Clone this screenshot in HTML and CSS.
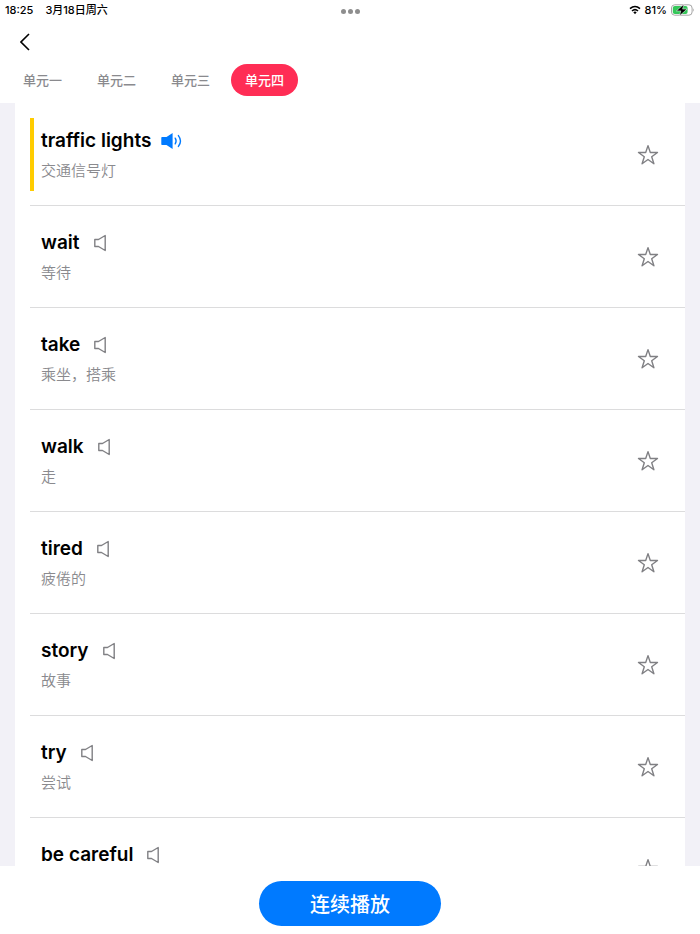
FILE: index.html
```html
<!DOCTYPE html>
<html lang="zh-CN">

<head>
    <meta charset="UTF-8">
    <meta name="viewport" content="width=device-width, initial-scale=1.0">
    <title>单元四</title>
    <link rel="stylesheet" href="styles.css">
</head>

<body>
    <!-- Shared icons -->
    <svg class="sprite" aria-hidden="true">
        <symbol id="speaker" viewBox="0 0 24 18">
            <path d="M0.8 5.5H4.5L11.2 1.5V16.5L4.5 12.5H0.8Z" fill="none" stroke="currentColor" stroke-width="1.4" stroke-linejoin="round" />
        </symbol>
        <symbol id="speaker-on" viewBox="0 0 24 18">
            <path d="M1 5H5.5L11.6 1V17L5.5 13H1Q0.3 13 0.3 12.3V5.7Q0.3 5 1 5Z" fill="currentColor" />
            <path d="M14.2 6.2Q16 9 14.2 11.8M17.4 3.6Q21.6 9 17.4 14.4" fill="none" stroke="currentColor" stroke-width="1.4" stroke-linecap="round" />
        </symbol>
        <symbol id="star" viewBox="0 0 22 22">
            <path d="M11 1.6L13.3 8.5H20.5L14.7 12.8L16.9 19.8L11 15.5L5.1 19.8L7.3 12.8L1.5 8.5H8.7Z" fill="none" stroke="currentColor" stroke-width="1.4" stroke-linejoin="round" />
        </symbol>
    </svg>

    <!-- Status bar -->
    <div class="status">
        <div class="status-left"><span>18:25</span><span>3月18日周六</span></div>
        <div class="dots"><i></i><i></i><i></i></div>
        <div class="status-right">
            <svg width="12" height="10" viewBox="0 0 12 10">
                <path d="M1 3.7Q6 -0.7 11 3.7M3 6Q6 3.4 9 6" fill="none" stroke="#000" stroke-width="1.6" />
                <path d="M4.3 7.3Q6 5.9 7.7 7.3L6 9.2Z" />
            </svg>
            <span>81%</span>
            <svg width="24" height="12" viewBox="0 0 24 12">
                <rect x="0.5" y="0.8" width="20.6" height="10.4" rx="3.2" fill="#fff" stroke="#a5a5a5" />
                <rect x="1.8" y="2.1" width="14.8" height="7.8" rx="2" fill="#34c759" />
                <path d="M22.2 4.2Q23.8 6 22.2 7.8Z" fill="#a5a5a5" />
                <path d="M12.9 0.2L5.4 6.9H9.8L8.5 11.8L16 5.1H11.6Z" stroke="#fff" stroke-width="0.5" />
            </svg>
        </div>
    </div>

    <!-- Navigation -->
    <header class="nav">
        <button class="back" aria-label="返回">
            <svg width="10" height="18" viewBox="0 0 10 18">
                <path d="M9 1L1 9L9 17" fill="none" stroke="#000" stroke-width="1.6" />
            </svg>
        </button>
    </header>

    <nav class="tabs">
        <button class="tab">单元一</button>
        <button class="tab">单元二</button>
        <button class="tab">单元三</button>
        <button class="tab active">单元四</button>
    </nav>

    <!-- Word list -->
    <main class="page">
        <ul class="words">
            <li class="word playing">
                <div class="text">
                    <div class="line">
                        <h2>traffic lights</h2>
                        <button class="icon" aria-label="播放"><svg width="24" height="18"><use href="#speaker-on" /></svg></button>
                    </div>
                    <p>交通信号灯</p>
                </div>
                <button class="icon" aria-label="收藏"><svg width="22" height="22"><use href="#star" /></svg></button>
            </li>
            <li class="word">
                <div class="text">
                    <div class="line">
                        <h2>wait</h2>
                        <button class="icon" aria-label="播放"><svg width="24" height="18"><use href="#speaker" /></svg></button>
                    </div>
                    <p>等待</p>
                </div>
                <button class="icon" aria-label="收藏"><svg width="22" height="22"><use href="#star" /></svg></button>
            </li>
            <li class="word">
                <div class="text">
                    <div class="line">
                        <h2>take</h2>
                        <button class="icon" aria-label="播放"><svg width="24" height="18"><use href="#speaker" /></svg></button>
                    </div>
                    <p>乘坐，搭乘</p>
                </div>
                <button class="icon" aria-label="收藏"><svg width="22" height="22"><use href="#star" /></svg></button>
            </li>
            <li class="word">
                <div class="text">
                    <div class="line">
                        <h2>walk</h2>
                        <button class="icon" aria-label="播放"><svg width="24" height="18"><use href="#speaker" /></svg></button>
                    </div>
                    <p>走</p>
                </div>
                <button class="icon" aria-label="收藏"><svg width="22" height="22"><use href="#star" /></svg></button>
            </li>
            <li class="word">
                <div class="text">
                    <div class="line">
                        <h2>tired</h2>
                        <button class="icon" aria-label="播放"><svg width="24" height="18"><use href="#speaker" /></svg></button>
                    </div>
                    <p>疲倦的</p>
                </div>
                <button class="icon" aria-label="收藏"><svg width="22" height="22"><use href="#star" /></svg></button>
            </li>
            <li class="word">
                <div class="text">
                    <div class="line">
                        <h2>story</h2>
                        <button class="icon" aria-label="播放"><svg width="24" height="18"><use href="#speaker" /></svg></button>
                    </div>
                    <p>故事</p>
                </div>
                <button class="icon" aria-label="收藏"><svg width="22" height="22"><use href="#star" /></svg></button>
            </li>
            <li class="word">
                <div class="text">
                    <div class="line">
                        <h2>try</h2>
                        <button class="icon" aria-label="播放"><svg width="24" height="18"><use href="#speaker" /></svg></button>
                    </div>
                    <p>尝试</p>
                </div>
                <button class="icon" aria-label="收藏"><svg width="22" height="22"><use href="#star" /></svg></button>
            </li>
            <li class="word">
                <div class="text">
                    <div class="line">
                        <h2>be careful</h2>
                        <button class="icon" aria-label="播放"><svg width="24" height="18"><use href="#speaker" /></svg></button>
                    </div>
                </div>
                <button class="icon" aria-label="收藏"><svg width="22" height="22"><use href="#star" /></svg></button>
            </li>
        </ul>
    </main>

    <footer class="footer">
        <button class="play">连续播放</button>
    </footer>
</body>

</html>
```

FILE: styles.css
```css
* {
    box-sizing: border-box;
}

body {
    display: flex;
    flex-direction: column;
    height: 100vh;
    margin: 0;
    overflow: hidden;
    background-color: #fff;
    color: #000;
    font-family: Inter, "Noto Sans CJK SC", sans-serif;
}

button {
    padding: 0;
    border: none;
    background: none;
    color: inherit;
    font-family: inherit;
    cursor: pointer;
}

svg {
    display: block;
}

.sprite {
    position: absolute;
    width: 0;
    height: 0;
}

/* Status bar */
.status {
    display: grid;
    grid-template-columns: 1fr auto 1fr;
    align-items: center;
    height: 20px;
    padding: 0 5px;
    font-size: 11px;
    font-weight: 500;
    line-height: 18px;
}

.status-left {
    display: flex;
    gap: 12px;
}

.status-right {
    display: flex;
    align-items: center;
    justify-content: flex-end;
    gap: 4px;
}

.dots {
    display: flex;
    gap: 2px;
    padding-top: 3px;
}

.dots i {
    width: 5px;
    height: 5px;
    border-radius: 50%;
    background-color: #8e8e8e;
}

/* Navigation */
.nav {
    display: flex;
    align-items: center;
    height: 44px;
    padding: 0 20px;
}

.tabs {
    display: flex;
    gap: 7px;
    height: 39px;
    padding: 0 9px;
}

.tab {
    height: 32px;
    padding: 0 14px 2px;
    border-radius: 16px;
    color: #8a8a8e;
    font-size: 13px;
    font-weight: 500;
}

.tab.active {
    background-color: #ff2d55;
    color: #fff;
}

/* Word list */
.page {
    flex: 1;
    min-height: 0;
    padding: 0 15px;
    overflow: hidden;
    background-color: #f2f1f7;
}

.words {
    margin: 0;
    padding: 1px 0 0 15px;
    list-style: none;
    background-color: #fff;
}

.word {
    display: flex;
    align-items: center;
    justify-content: space-between;
    height: 102px;
    padding: 14px 26px 14px 0;
    border-bottom: 1px solid #dcdcdd;
    color: #808084;
}

.text {
    align-self: stretch;
    padding: 10px 0 0 7px;
    border-left: 4px solid transparent;
}

.playing .text {
    border-color: #ffcc00;
}

.line {
    display: flex;
    align-items: center;
    gap: 14px;
}

.playing .line {
    gap: 10px;
    color: #007aff;
}

.word h2 {
    margin: 0;
    color: #000;
    font-size: 19px;
    font-weight: 600;
    line-height: 26px;
}

.word p {
    margin: 6px 0 0;
    color: #8a8a8e;
    font-size: 15px;
    font-weight: 350;
    line-height: 22px;
}

/* Footer */
.footer {
    display: flex;
    justify-content: center;
    height: 68px;
    padding-top: 15px;
}

.play {
    width: 182px;
    height: 45px;
    border-radius: 23px;
    background-color: #007aff;
    color: #fff;
    font-size: 20px;
    font-weight: 500;
}
```
